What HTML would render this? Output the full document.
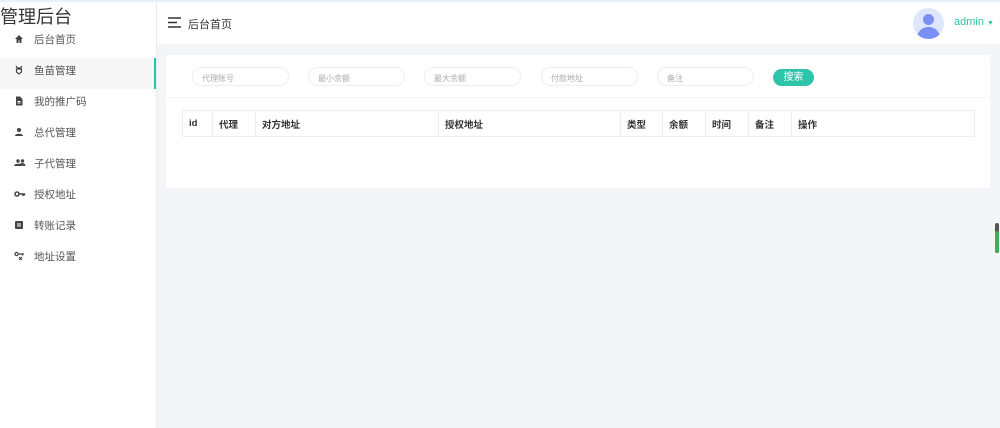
<!DOCTYPE html>
<html><head><meta charset="utf-8"><style>
*{margin:0;padding:0;box-sizing:border-box}
body{width:1000px;height:428px;overflow:hidden;background:#f4f5f9;font-family:"Liberation Sans","Noto Sans CJK SC",sans-serif;position:relative}
.side{position:absolute;left:0;top:0;width:157px;height:428px;background:#fff;border-right:1px solid #ebebeb;border-top:2px solid #e8f1f8}
.title{position:absolute;left:0;top:1px;font-size:18px;color:#333;white-space:nowrap}
.item{position:absolute;left:0;width:156px;height:31px;font-size:10.5px;color:#555}
.item span{position:absolute;left:34px;top:8px}
.item svg{position:absolute;left:14px;top:10px}
.act{background:#f7f7f7;border-right:2px solid #2ec4a9}
.act span{top:5px}
.act svg{top:7px}
.head{position:absolute;left:157px;top:0;right:0;height:44px;background:#fff;border-top:2px solid #e8f1f8}
.card{position:absolute;left:166px;top:55px;width:824px;height:133px;background:#fff;border-radius:2px}
.in{position:absolute;top:12px;width:97px;height:19px;border:1px solid #eee;border-radius:10px;font-size:8px;color:#aaa;padding:5px 0 0 9px}
.btn{position:absolute;left:607px;top:14px;width:41px;height:17px;background:#2ec4a9;border-radius:9px;color:#fff;font-size:10px;text-align:center;line-height:17px}
.hr{position:absolute;left:0;right:0;top:42px;border-top:1px solid #f4f4f4}
table{position:absolute;left:16px;top:55px;border-collapse:collapse;font-size:9.5px;font-weight:bold;color:#333}
td{border:1px solid #eee;height:26px;padding:0 6px;vertical-align:middle}
</style></head><body>
<div class="side">
<div class="title">管理后台</div>
<div class="item" style="top:22px"><svg width="10" height="10" viewBox="0 0 10 10"><path d="M5 1L1 5h1.5v4h2V6.5h1V9h2V5H9z" fill="#444"/></svg><span>后台首页</span></div>
<div class="item act" style="top:56px"><svg width="10" height="10" viewBox="0 0 10 10"><path d="M2 1l1.5 2h3L8 1M2.5 4h5v3l-2.5 2-2.5-2z" fill="none" stroke="#444" stroke-width="1.2"/></svg><span>鱼苗管理</span></div>
<div class="item" style="top:84px"><svg width="10" height="10" viewBox="0 0 10 10"><path d="M2 0.5h4l2.5 2.5v6.5H2z" fill="#444"/><path d="M3.5 5.5h3M3.5 7h3" stroke="#fff"/></svg><span>我的推广码</span></div>
<div class="item" style="top:115px"><svg width="10" height="10" viewBox="0 0 10 10"><circle cx="5" cy="3" r="2" fill="#444"/><path d="M1 9c0-3 8-3 8 0z" fill="#444"/></svg><span>总代管理</span></div>
<div class="item" style="top:146px"><svg width="12" height="10" viewBox="0 0 12 10"><circle cx="4" cy="3" r="1.7" fill="#444"/><circle cx="8.5" cy="3" r="1.7" fill="#444"/><path d="M0 8c0-3 8-3 8 0zM5.5 6c2-1.5 6-1 6 2H9z" fill="#444"/></svg><span>子代管理</span></div>
<div class="item" style="top:177px"><svg width="12" height="10" viewBox="0 0 12 10"><circle cx="3" cy="5" r="2" fill="none" stroke="#444" stroke-width="1.5"/><path d="M5 5h6M9 5v2M10.5 5v1.5" stroke="#444" stroke-width="1.4"/></svg><span>授权地址</span></div>
<div class="item" style="top:208px"><svg width="10" height="10" viewBox="0 0 10 10"><rect x="1" y="1" width="8" height="8" rx="1" fill="#444"/><path d="M3 4h4M3 6h4" stroke="#fff"/></svg><span>转账记录</span></div>
<div class="item" style="top:239px"><svg width="12" height="10" viewBox="0 0 12 10"><circle cx="2.5" cy="3" r="1.6" fill="none" stroke="#444" stroke-width="1.2"/><path d="M4 3h6M8.5 3v1.5M5 6l3 3M8 6l-3 3" stroke="#444" stroke-width="1.2"/></svg><span>地址设置</span></div>
</div>
<div class="head">
<svg style="position:absolute;left:11px;top:15px" width="13" height="11" viewBox="0 0 13 11"><path d="M0 1h13M0 5.5h9M0 10h13" stroke="#333" stroke-width="1.4"/></svg>
<div style="position:absolute;left:31px;top:14px;font-size:11px;color:#333">后台首页</div>
<div style="position:absolute;left:756px;top:6px;width:31px;height:31px;border-radius:50%;background:#dfe6fb;overflow:hidden">
<div style="position:absolute;left:10px;top:6px;width:11px;height:11px;border-radius:50%;background:#7b8ef5"></div>
<div style="position:absolute;left:4px;top:19px;width:23px;height:14px;border-radius:11px 11px 0 0;background:#7b8ef5"></div></div>
<div style="position:absolute;left:797px;top:14px;font-size:11px;color:#2ec4a9">admin <span style="font-size:7px">▼</span></div>
</div>
<div class="card">
<div class="in" style="left:26px">代理账号</div>
<div class="in" style="left:142px">最小余额</div>
<div class="in" style="left:258px">最大余额</div>
<div class="in" style="left:375px">付款地址</div>
<div class="in" style="left:491px">备注</div>
<div class="btn">搜索</div>
<div class="hr"></div>
<table><tr>
<td style="width:30px">id</td><td style="width:43px">代理</td><td style="width:183px">对方地址</td><td style="width:182px">授权地址</td><td style="width:42px">类型</td><td style="width:43px">余额</td><td style="width:43px">时间</td><td style="width:43px">备注</td><td style="width:183px">操作</td>
</tr></table>
</div>
<div style="position:absolute;left:995px;top:223px;width:4px;height:30px;border-radius:2px;background:#555"><div style="margin-top:8px;height:22px;background:#3fae5a;border-radius:2px"></div></div>
</body></html>
